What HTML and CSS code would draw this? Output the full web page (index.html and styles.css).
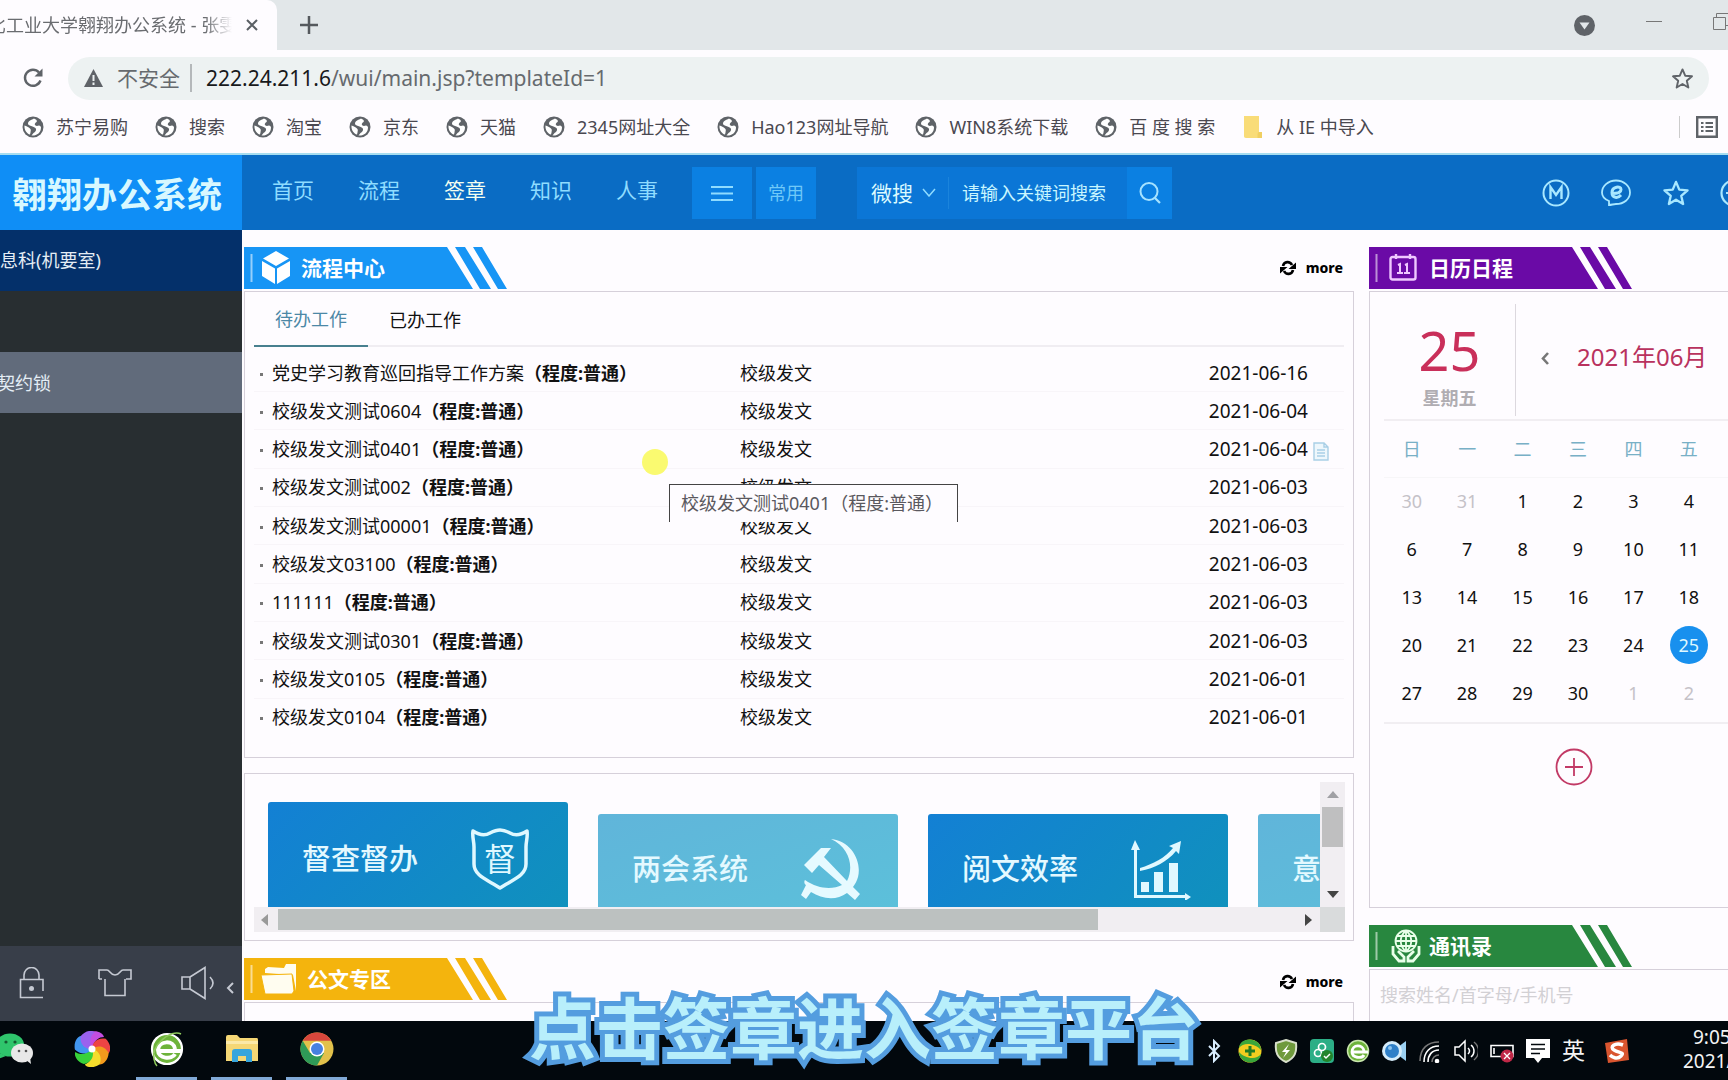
FILE: index.html
```html
<!DOCTYPE html>
<html lang="zh-CN">
<head>
<meta charset="utf-8">
<meta name="viewport" content="width=device-width, initial-scale=1">
<title>翱翔办公系统</title>
<link rel="stylesheet" href="styles.css">
</head>
<body>
<svg class="defs" aria-hidden="true">
  <symbol id="globe" viewBox="0 0 22 22"><circle cx="11" cy="11" r="10.5" fill="#5f6368"/><path d="M11 3c-2 1-5 2-5 4.500 0 2 3 2 4.500 3s3 1 3.500 2.500-1 3-2.500 4l-2 2.500c5 .5 9.500-2.500 9.500-8 0-1-1-2-2-2s-2 1-3.500 0S13 7 14.500 6 13 2 11 3z" fill="#fff"/><path d="M2.500 9.500c2 .5 4 1.500 5.500 3s.5 2.500.5 4l-.5 2C5 18 2 14 2.500 9.500z" fill="#fff"/></symbol>
  <symbol id="ribbon" viewBox="0 0 263 42"><path fill="currentColor" d="M0 0H203L229 42H0zM211 0H221L247 42H236zM229 0H238L263 42H254z"/><path d="M7.500 7V35" stroke="#fff" stroke-opacity=".55" stroke-width="2"/></symbol>
  <symbol id="refresh" viewBox="0 0 16 16"><path d="M3 6C4 1 10 1 12 5M13 10c-1 5-7 5-9 1" fill="none" stroke="#000" stroke-width="2.600"/><path d="M16 2.500V9H8.500zM0 13.500V7h7.500z"/></symbol>
  <symbol id="star" viewBox="0 0 24 24"><path d="M12 2.500l2.800 6.600 7.100.6-5.400 4.700 1.600 7-6.100-3.700-6.100 3.700 1.600-7L2.100 9.700l7.100-.6z" fill="none" stroke="currentColor" stroke-width="2" stroke-linejoin="round"/></symbol>
</svg>

<header class="browser">
  <div class="tabstrip">
    <div class="tab"><span class="tab-title">比工业大学翱翔办公系统 - 张雯</span>
      <button class="plain" aria-label="关闭标签页"><svg width="14" height="14" viewBox="0 0 14 14"><path d="M2 2l10 10M12 2L2 12" stroke="#5a5f64" stroke-width="2"/></svg></button></div>
    <button class="plain new-tab" aria-label="新标签页"><svg width="18" height="18" viewBox="0 0 18 18"><path d="M9 0v18M0 9h18" stroke="#55595d" stroke-width="2.500"/></svg></button>
    <div class="window-tools">
      <svg width="21" height="21" viewBox="0 0 21 21"><circle cx="10.500" cy="10.500" r="10.500" fill="#5f6368"/><path d="M5.500 7.500h10l-5 7z" fill="#e2e7e9"/></svg>
      <svg width="16" height="16" viewBox="0 0 16 16"><path d="M0 4.500h16" stroke="#777"/></svg>
      <svg width="17" height="25" viewBox="0 0 17 25"><path d="M.5 4.500h12v12H.5zM3.500 4.500v-4h13v12h-4" fill="none" stroke="#777"/></svg>
    </div>
  </div>
  <div class="toolbar">
    <button class="plain" aria-label="重新加载"><svg width="22" height="22" viewBox="0 0 22 22"><path d="M18.500 13.500A8 8 0 1 1 17 5.500" fill="none" stroke="#5f6368" stroke-width="2.400"/><path d="M20.500 1.500v8h-8z" fill="#5f6368"/></svg></button>
    <div class="omnibox">
      <svg width="19" height="18" viewBox="0 0 19 18"><path d="M9.500 0L19 18H0z" fill="#5f6368"/><path d="M9.500 6v6M9.500 13.500v2.500" stroke="#edf2f2" stroke-width="2"/></svg>
      <span class="insecure">不安全</span>
      <span class="url"><b>222.24.211.6</b>/wui/main.jsp?templateId=1</span>
      <button class="plain bookmark-star" aria-label="收藏"><svg width="23" height="23"><use href="#star"/></svg></button>
    </div>
  </div>
  <nav class="bookmarks">
    <a href="#"><svg><use href="#globe"/></svg>苏宁易购</a>
    <a href="#"><svg><use href="#globe"/></svg>搜索</a>
    <a href="#"><svg><use href="#globe"/></svg>淘宝</a>
    <a href="#"><svg><use href="#globe"/></svg>京东</a>
    <a href="#"><svg><use href="#globe"/></svg>天猫</a>
    <a href="#"><svg><use href="#globe"/></svg>2345网址大全</a>
    <a href="#"><svg><use href="#globe"/></svg>Hao123网址导航</a>
    <a href="#"><svg><use href="#globe"/></svg>WIN8系统下载</a>
    <a href="#"><svg><use href="#globe"/></svg>百 度 搜 索</a>
    <a href="#"><svg viewBox="0 0 22 22"><path d="M2 0h15v16h3v6H4c-1.500 0-2-1-2-2z" fill="#f9dc78"/><path d="M17 16c-1 0-1.500 1-1.500 3v3H20v-6z" fill="#f0cf62"/></svg>从 IE 中导入</a>
    <button class="plain reading-list" aria-label="阅读清单"><svg width="22" height="22" viewBox="0 0 22 22"><path d="M1.200 1.200h19.600v19.600H1.200z" fill="none" stroke="#5f6368" stroke-width="2.400"/><path d="M5 7h2.500M5 11h2.500M5 15h2.500M9.500 7H17M9.500 11H17M9.500 15H17" stroke="#5f6368" stroke-width="2.200"/></svg></button>
  </nav>
</header>

<div class="app-header">
  <a class="logo" href="#">翱翔办公系统</a>
  <nav class="app-nav"><a href="#">首页</a><a href="#">流程</a><a class="active" href="#">签章</a><a href="#">知识</a><a href="#">人事</a></nav>
  <div class="quick">
    <button aria-label="菜单"><svg width="22" height="16" viewBox="0 0 22 16"><path d="M0 2h22M0 8.500h22M0 15h22" stroke="#8fdcff" stroke-width="2"/></svg></button>
    <button>常用</button>
  </div>
  <form class="search">
    <button type="button" class="scope">微搜<svg width="14" height="9" viewBox="0 0 14 9"><path d="M1 1l6 7 6-7" fill="none" stroke="#8fdcff" stroke-width="1.500"/></svg></button>
    <input type="text" placeholder="请输入关键词搜索" aria-label="请输入关键词搜索">
    <button type="button" class="go" aria-label="搜索"><svg width="22" height="22" viewBox="0 0 22 22"><circle cx="10" cy="9.500" r="8.500" fill="none" stroke="#a5e2ff" stroke-width="2"/><path d="M16 16l5 5" stroke="#a5e2ff" stroke-width="2.200"/></svg></button>
  </form>
  <div class="tools">
    <svg width="28" height="28" viewBox="0 0 28 28" fill="none" stroke="#a9e8ff" stroke-width="2"><circle cx="14" cy="14" r="12.500"/><path d="M8.500 20V8l5.500 8 5.500-8v12" stroke-width="2.400"/></svg>
    <svg width="32" height="28" viewBox="0 0 32 28" fill="none" stroke="#a9e8ff" stroke-width="1.800"><path d="M9 26v-4C4 20 2 17 2 13.500 2 7 8 1.500 16 1.500S30 7 30 13.500 24 25 16 25c-2 0-5 1-7 1z"/><path d="M12 14.500c5 0 9-1 9-4 0-4-9-3-9 3 0 6 6 6 9 2.500" stroke-width="3"/></svg>
    <svg width="28" height="28"><use href="#star"/></svg>
    <svg width="28" height="28" viewBox="0 0 28 28" fill="none" stroke="#a9e8ff" stroke-width="2.200"><circle cx="14" cy="14" r="12.500"/><path d="M6 14h16"/></svg>
  </div>
</div>

<div class="workspace">
  <aside class="sidebar">
    <div class="dept">息科(机要室)</div>
    <nav><a class="blank" href="#" aria-label="菜单项"></a><a class="selected" href="#">契约锁</a></nav>
    <div class="side-tools">
      <button class="plain" aria-label="锁定"><svg width="25" height="32" viewBox="0 0 25 32"><path d="M5 12V8a7.500 7.500 0 0 1 15 0v4M24 24V12.500H1.500v18H24" fill="none" stroke="#c5c9d2" stroke-width="1.600"/><circle cx="12.500" cy="21.500" r="2.500" fill="#c5c9d2"/></svg></button>
      <button class="plain" aria-label="换肤"><svg width="34" height="29" viewBox="0 0 34 29"><path d="M1 11V2h8c3 0 3 5 8 5s5-5 8-5h8v9h-5M7 11v16.500h20V11M1 11h3" fill="none" stroke="#c5c9d2" stroke-width="1.600"/></svg></button>
      <button class="plain" aria-label="声音"><svg width="36" height="34" viewBox="0 0 36 34"><path d="M1 11h8v12H1zM9 11L24 1.500v31L9 23M29 11c4 4 4 8 0 12" fill="none" stroke="#c5c9d2" stroke-width="1.600"/></svg></button>
      <button class="plain" aria-label="收起"><svg width="8" height="12" viewBox="0 0 8 12"><path d="M7 1L2 6l5 5" fill="none" stroke="#c5c9d2" stroke-width="2"/></svg></button>
    </div>
  </aside>

  <main class="center">
    <section>
      <div class="head">
        <div class="banner blue"><svg class="shape"><use href="#ribbon"/></svg><h2><svg width="30" height="34" viewBox="0 0 30 34" fill="#fff"><path d="M15 0l13 7.500L15 15 2 7.500zM1 10l13 7.500V33L1 25zM29 10l-13 7.500V33l13-8z"/></svg>流程中心</h2></div>
        <a class="more" href="#"><svg width="16" height="16"><use href="#refresh"/></svg>more</a>
      </div>
      <div class="panel flow">
        <div class="tabs"><button class="on">待办工作</button><button>已办工作</button></div>
        <table class="tasks">
          <tr><td>党史学习教育巡回指导工作方案<b>（程度:普通）</b></td><td>校级发文</td><td>2021-06-16</td></tr>
          <tr><td>校级发文测试0604<b>（程度:普通）</b></td><td>校级发文</td><td>2021-06-04</td></tr>
          <tr><td>校级发文测试0401<b>（程度:普通）</b></td><td>校级发文</td><td>2021-06-04<svg class="doc" width="18" height="19" viewBox="0 0 18 19"><path d="M2 1h10l4 4v13H2zM12 1v4h4M5 8h8M5 11h8M5 14h8" fill="#eef7fc" stroke="#a9cfe6" stroke-width="1.400"/></svg></td></tr>
          <tr><td>校级发文测试002<b>（程度:普通）</b></td><td>校级发文</td><td>2021-06-03</td></tr>
          <tr><td>校级发文测试00001<b>（程度:普通）</b></td><td>校级发文</td><td>2021-06-03</td></tr>
          <tr><td>校级发文03100<b>（程度:普通）</b></td><td>校级发文</td><td>2021-06-03</td></tr>
          <tr><td>111111<b>（程度:普通）</b></td><td>校级发文</td><td>2021-06-03</td></tr>
          <tr><td>校级发文测试0301<b>（程度:普通）</b></td><td>校级发文</td><td>2021-06-03</td></tr>
          <tr><td>校级发文0105<b>（程度:普通）</b></td><td>校级发文</td><td>2021-06-01</td></tr>
          <tr><td>校级发文0104<b>（程度:普通）</b></td><td>校级发文</td><td>2021-06-01</td></tr>
        </table>
        <span class="pointer"></span>
        <div class="tooltip" role="tooltip">校级发文测试0401（程度:普通）</div>
      </div>
    </section>

    <section class="panel links">
      <div class="scroller">
        <div class="tiles">
          <a class="tile deep tall" href="#">督查督办<svg width="62" height="64" viewBox="0 0 62 64"><path d="M4 4c6 4 12 5 17 2 4-2 6-3 10-3s6 1 10 3c5 3 11 2 17-2 1 6-1 10-1 16v17c0 12-14 16-26 24C19 53 5 49 5 37V20C5 14 3 10 4 4z" fill="none" stroke="#dff8ff" stroke-width="3.500" stroke-linejoin="round"/><text x="31" y="44" class="seal">督</text></svg></a>
          <a class="tile light" href="#">两会系统<svg width="60" height="62" viewBox="0 0 60 62" fill="#e6faff"><path d="M30 1c20 2 31 22 27 38-1 4-3 7-5 10l7 7-5 6-8-7c-11 8-25 6-36-1l-5 7-5-4 5-10c-2-1-2-4-1-5 13 9 27 10 37 5L18 27l-7 8-8-8 17-17h10l-7 9 23 24c7-14 3-33-16-42z"/></svg></a>
          <a class="tile deep" href="#">阅文效率<svg width="60" height="62" viewBox="0 0 60 62" fill="#e0f8ff"><path d="M4 2L0 12h3v48h51v3l6-4-6-4v2H6V12h3zM10 44h8v10h-8zM23 34h9v20h-9zM38 25h9v29h-9z"/><path d="M9 30C22 26 34 20 42 10l-4-2 12-5-2 13-3-3C36 24 24 30 9 33z"/></svg></a>
          <a class="tile light" href="#">意见反馈</a>
        </div>
        <div class="vbar"><i class="up"></i><i class="vthumb"></i><i class="down"></i></div>
        <div class="hbar"><i class="left"></i><i class="hthumb"></i><i class="right"></i></div>
        <div class="corner"></div>
      </div>
    </section>

    <section class="docs">
      <div class="head">
        <div class="banner yellow"><svg class="shape"><use href="#ribbon"/></svg><h2><svg width="36" height="30" viewBox="0 0 36 30" fill="#fffdf0"><path d="M4 9V5l3-2 16 1 2-4h10v27l-3-16z"/><path d="M0 11l31-1 2 17-2 3H4z" stroke="#f4b40d"/></svg>公文专区</h2></div>
        <a class="more" href="#"><svg width="16" height="16"><use href="#refresh"/></svg>more</a>
      </div>
      <div class="panel rest"></div>
    </section>
  </main>

  <aside class="right">
    <section>
      <div class="head"><div class="banner purple"><svg class="shape"><use href="#ribbon"/></svg><h2><svg width="28" height="28" viewBox="0 0 28 28" fill="none" stroke="#efc8ff" stroke-width="2.400"><rect x="1.500" y="3" width="25" height="22.500" rx="2"/><path d="M7 0v5M21 0v5" /><path d="M9 11l2-1v9M8 19h6M16 11l2-1v9M15 19h6" stroke-width="2"/></svg>日历日程</h2></div></div>
      <div class="panel agenda">
        <div class="calendar">
          <div class="cal-top">
            <div class="today"><strong>25</strong><span>星期五</span></div>
            <button class="plain" aria-label="上个月"><svg width="8" height="13" viewBox="0 0 8 13"><path d="M7 1L2 6.500 7 12" fill="none" stroke="#777" stroke-width="2.600"/></svg></button>
            <span class="month">2021年06月</span>
          </div>
          <table class="days">
            <thead><tr><th>日</th><th>一</th><th>二</th><th>三</th><th>四</th><th>五</th><th>六</th></tr></thead>
            <tbody>
              <tr><td class="out">30</td><td class="out">31</td><td>1</td><td>2</td><td>3</td><td>4</td><td>5</td></tr>
              <tr><td>6</td><td>7</td><td>8</td><td>9</td><td>10</td><td>11</td><td>12</td></tr>
              <tr><td>13</td><td>14</td><td>15</td><td>16</td><td>17</td><td>18</td><td>19</td></tr>
              <tr><td>20</td><td>21</td><td>22</td><td>23</td><td>24</td><td><span class="now">25</span></td><td>26</td></tr>
              <tr><td>27</td><td>28</td><td>29</td><td>30</td><td class="out">1</td><td class="out">2</td><td class="out">3</td></tr>
            </tbody>
          </table>
          <div class="add"><button class="plain" aria-label="新建日程"><svg width="38" height="38" viewBox="0 0 38 38" fill="none" stroke="#c23a66" stroke-width="1.800"><circle cx="19" cy="19" r="17.500"/><path d="M19 10v18M10 19h18"/></svg></button></div>
        </div>
      </div>
    </section>
    <section class="contacts">
      <div class="head"><div class="banner green"><svg class="shape"><use href="#ribbon"/></svg><h2><svg width="30" height="34" viewBox="0 0 30 34" fill="none" stroke="#e9ffe9" stroke-width="1.800"><circle cx="15" cy="12" r="10.500"/><path d="M15 1.500v21M4.500 12h21M6 7h18M6 17h18M15 1.500c-7 6-7 15 0 21M15 1.500c7 6 7 15 0 21"/><path d="M2 17v8l6 7h5v-4l-6-6M28 17v8l-6 7h-5v-4l6-6" stroke-width="2.800"/></svg>通讯录</h2></div></div>
      <div class="panel rest"><input type="text" placeholder="搜索姓名/首字母/手机号" aria-label="搜索姓名/首字母/手机号"></div>
    </section>
  </aside>
</div>

<footer class="taskbar">
  <div class="apps">
    <span class="app wechat"><svg width="44" height="32" viewBox="0 0 44 32"><ellipse cx="20" cy="12" rx="14" ry="11.500" fill="#2fc56c"/><path d="M10 20l-2 6 8-3z" fill="#2fc56c"/><circle cx="16" cy="9" r="1.600" fill="#155b32"/><circle cx="25" cy="9" r="1.600" fill="#155b32"/><ellipse cx="32" cy="20" rx="11" ry="9.500" fill="#e8e8e8"/><path d="M36 27l5 4-1-7z" fill="#e8e8e8"/><circle cx="29" cy="18" r="1.300" fill="#555"/><circle cx="36" cy="18" r="1.300" fill="#555"/></svg></span>
    <span class="app"><svg width="36" height="36" viewBox="-18 -18 36 36"><path d="M0 0C-5-3-8-10-2-17 5-19 11-16 12-12 7-12 2-9 0 0z" fill="#c44de0"/><path d="M0 0C-5-3-8-10-2-17 5-19 11-16 12-12 7-12 2-9 0 0z" fill="#ee4444" transform="rotate(60)"/><path d="M0 0C-5-3-8-10-2-17 5-19 11-16 12-12 7-12 2-9 0 0z" fill="#f39a1d" transform="rotate(110)"/><path d="M0 0C-5-3-8-10-2-17 5-19 11-16 12-12 7-12 2-9 0 0z" fill="#f5dd2c" transform="rotate(160)"/><path d="M0 0C-5-3-8-10-2-17 5-19 11-16 12-12 7-12 2-9 0 0z" fill="#38d23a" transform="rotate(215)"/><path d="M0 0C-5-3-8-10-2-17 5-19 11-16 12-12 7-12 2-9 0 0z" fill="#4196f0" transform="rotate(275)"/><path d="M0 0C-5-3-8-10-2-17 5-19 11-16 12-12 7-12 2-9 0 0z" fill="#9a62ee" transform="rotate(325)"/><circle r="3.500" fill="#fff"/></svg></span>
    <span class="app open"><svg width="34" height="36" viewBox="-17 -18 34 36"><circle r="15" fill="#6db33a" stroke="#fff" stroke-width="2.200"/><path d="M-8 2H15M8 0C7-9-8-9-9 1-9 10 5 11 8 5" fill="none" stroke="#fff" stroke-width="4"/><path d="M14-15C4-20-16-4-13 10c1 5 2 6 3 7" fill="none" stroke="#8fca5c" stroke-width="1.500"/></svg></span>
    <span class="app open"><svg width="34" height="28" viewBox="0 0 34 28"><path d="M1 2q0-2 2-2h9l3 3h17q1 0 1 2v21H1z" fill="#f5d775"/><path d="M1 6h32v3H1z" fill="#fbe9a8"/><path d="M7 27V17q0-3 3-3h14q3 0 3 3v10h-6v-6h-8v6z" fill="#37a5dc"/></svg></span>
    <span class="app open"><svg width="34" height="34" viewBox="-17 -17 34 34"><circle r="16.500" fill="#e2c14b"/><path d="M-14.300-8.300A16.500 16.500 0 0 1 14.300-8.300H0z" fill="#d8473c"/><path d="M-14.300-8.300A16.500 16.500 0 0 0 0 16.500L7 4-7 4z" fill="#2f9a57"/><circle r="7.500" fill="#fff"/><circle r="6" fill="#4681e0"/></svg></span>
  </div>
  <div class="tray">
    <svg viewBox="-12 -12 24 24"><path d="M-5-5L5 5 0 10V-10L5-5-5 5" fill="none" stroke="#d9eeff" stroke-width="2"/></svg>
    <svg viewBox="-12 -12 24 24"><circle r="11.500" fill="#f2cd20"/><path d="M-11-3C-6-10 6-7 11-1 11-14-10-15-11-3zM11 3C6 10-6 7-11 1-11 14 10 15 11 3z" fill="#3aa63a"/><path d="M0-5V5M-5 0H5" stroke="#217b24" stroke-width="3"/></svg>
    <svg viewBox="-12 -12 24 24"><path d="M0-11l10 3c1 9-1 15-10 19-9-4-11-10-10-19z" fill="#6f9a3c" stroke="#d9e0cb" stroke-width="2"/><path d="M3-7l-7 8h4l-3 6 7-8H0z" fill="#fff"/></svg>
    <svg viewBox="-12 -12 24 24"><rect x="-12" y="-12" width="24" height="24" rx="4" fill="#2cae86"/><circle cx="-4" cy="2" r="3.500" fill="none" stroke="#fff" stroke-width="1.700"/><circle cx="0" cy="-4" r="3.500" fill="none" stroke="#fff" stroke-width="1.700"/><circle cx="5" cy="5" r="6" fill="#23852c"/><path d="M2 5l2 2 4-4" fill="none" stroke="#fff" stroke-width="1.500"/></svg>
    <svg viewBox="-12 -12 24 24"><circle r="10.500" fill="#6db33a" stroke="#c9e6ae" stroke-width="1.500"/><path d="M-6 1H10M6 0C5-7-6-7-6 1-6 7 4 8 6 4" fill="none" stroke="#fff" stroke-width="2.800"/></svg>
    <svg viewBox="-12 -12 24 24"><path d="M4-4l8-6V10L4 4z" fill="#9ad0f2"/><circle r="10" cx="-2" fill="#d5edfb"/><circle r="7" cx="-2" fill="#2f80c8"/><circle r="2" cx="-4" cy="-3" fill="#8cc5f0"/></svg>
    <svg viewBox="-12 -12 24 24" fill="none" stroke="#fff" stroke-width="1.600"><path d="M-10 10C-10-3-2-9 9-9" stroke="#777"/><path d="M-6 11C-6 1 0-5 9-5M-2 11C-2 4 2-1 9-1"/><path d="M2 11C2 7 5 4 9 4" stroke="#777"/><circle cx="7" cy="10" r="1.500" fill="#fff"/></svg>
    <svg viewBox="-12 -12 24 24" fill="none" stroke="#fff" stroke-width="1.500"><path d="M-11-4h4l6-6v20l-6-6h-4zM2-3c2 2 2 4 0 6M5-6c4 3 4 9 0 12"/><path d="M8-9c6 5 6 13 0 18" stroke="#777"/></svg>
    <svg viewBox="-12 -12 24 24"><path d="M-11-5.500H11v11H-11zM-8-3v6" fill="none" stroke="#fff" stroke-width="1.600"/><circle cx="5" cy="5" r="6.500" fill="#c02847"/><path d="M2 2l6 6M8 2L2 8" stroke="#fff" stroke-width="1.300"/></svg>
    <svg viewBox="-12 -12 24 24"><path d="M-12-12h24V7H4l-4 5-4-5h-8z" fill="#fff"/><path d="M-7-6.500H7M-7-2H7M-7 2.500H2" stroke="#02080d" stroke-width="1.600"/></svg>
    <span class="ime">英</span>
    <svg viewBox="-12 -12 24 24"><path d="M-12-8L10-12 12 9-9 12z" fill="#d9552f"/><path d="M6-6C-2-9-8-4-3-1S8 1 4 5-5 6-7 4" fill="none" stroke="#fff" stroke-width="3.500"/></svg>
  </div>
  <div class="clock"><span>9:05</span><span>2021/</span></div>
</footer>
<div class="caption">点击签章进入签章平台</div>
</body>
</html>
```
FILE: styles.css
```css
* { box-sizing: border-box; }
body {
  margin: 0;
  height: 100vh;
  overflow: hidden;
  display: flex;
  flex-direction: column;
  position: relative;
  background: #fefcff;
  color: #111;
  font: 18px/24px "Noto Sans", "Noto Sans CJK SC", sans-serif;
}
a { color: inherit; text-decoration: none; }
button, input { font: inherit; color: inherit; border: 0; padding: 0; margin: 0; background: none; }
svg { display: block; flex: none; }
h2 { margin: 0; }
.defs { position: absolute; width: 0; height: 0; }
.plain { display: grid; place-items: center; flex: none; }

/* browser chrome */
.browser { flex: none; white-space: nowrap; }
.tabstrip { height: 50px; background: #e2e7e9; display: flex; align-items: center; }
.tab {
  width: 277px; height: 50px; flex: none; background: #fefcff; border-radius: 0 10px 0 0;
  display: flex; align-items: center; gap: 13px; color: #6a6c70;
}
.tab-title {
  width: 232px; overflow: hidden; display: flex; text-indent: -12px;
  mask-image: linear-gradient(90deg, #000 205px, transparent 232px);
}
.new-tab { margin-left: 23px; }
.window-tools { margin-left: auto; margin-right: -2px; display: flex; align-items: center; gap: 51px; }
.toolbar { height: 54px; padding: 6px 19px 4px 22px; display: flex; align-items: center; gap: 24px; }
.omnibox {
  flex: 1; height: 43px; border-radius: 22px; background: #edf2f2; padding: 0 15px 0 16px;
  display: flex; align-items: center; gap: 14px; font-size: 21px; color: #666a6e;
}
.insecure { border-right: 2px solid #b4b8ba; padding-right: 10px; line-height: 28px; }
.url b { font-weight: 400; color: #17191b; }
.bookmark-star { margin-left: auto; color: #5f6368; }
.bookmarks { height: 49px; padding: 0 10px 4px 22px; display: flex; align-items: center; gap: 27px; color: #4a4850; }
.bookmarks a { display: flex; align-items: center; gap: 12px; }
.bookmarks a svg { width: 22px; height: 22px; }
.reading-list { margin-left: auto; border-left: 1px solid #ccc; padding-left: 16px; }

/* application header */
.app-header {
  flex: none; height: 77px; background: #0a6cc4; border-top: 2px solid #a6ddf0;
  display: flex; align-items: center; white-space: nowrap;
}
.logo {
  width: 242px; align-self: stretch; flex: none; background: #0f8ef6; color: #d8f8ff; padding-right: 8px;
  font: bold 35px/75px "Noto Sans CJK SC", sans-serif; display: grid; place-items: center;
}
.app-nav { display: flex; gap: 44px; padding: 0 34px 6px 30px; font-size: 21px; color: #8fdcff; }
.app-nav .active { color: #f4fff0; }
.quick { display: flex; gap: 4px; }
.quick button { width: 60px; height: 52px; background: #0b80e2; color: #6fc8f8; display: grid; place-items: center; }
.search { margin-left: 41px; width: 315px; height: 52px; background: #0b76d6; display: flex; align-items: center; }
.scope { display: flex; align-items: center; gap: 9px; padding: 0 12px 0 14px; color: #dcfaff; font-size: 21px; border-right: 1px solid #1b84dc; line-height: 32px; }
.search input { flex: 1; min-width: 0; padding-left: 13px; }
.search input::placeholder { color: #c9f6ff; opacity: 1; }
.go { width: 45px; height: 52px; background: #0b80e2; display: grid; place-items: center; }
.tools { margin-left: auto; margin-right: -20px; display: flex; gap: 30px; color: #a9e8ff; }

/* workspace */
.workspace { flex: 1; min-height: 0; display: flex; overflow: hidden; }
.sidebar { width: 242px; flex: none; background: #282e31; color: #e4edf5; display: flex; flex-direction: column; }
.dept { height: 61px; line-height: 61px; background: #04306a; }
.sidebar nav { flex: 1; }
.sidebar nav a { display: block; height: 61px; line-height: 63px; text-indent: -3px; }
.sidebar .selected { background: #616b7b; }
.side-tools { height: 75px; background: #383e49; padding: 0 8px 2px 19px; display: flex; align-items: center; }
.side-tools button:nth-child(2) { margin-left: 54px; }
.side-tools button:nth-child(3) { margin-left: 49px; }
.side-tools button:last-child { margin: 10px 0 0 auto; }
.center { flex: 1; min-width: 0; padding: 17px 15px 0 2px; display: flex; flex-direction: column; }
.right { flex: none; width: 410px; margin-right: -51px; padding-top: 17px; display: flex; flex-direction: column; }
.head { display: flex; justify-content: space-between; align-items: center; padding-right: 11px; margin-bottom: 2px; }
.banner { display: grid; width: 263px; height: 42px; }
.banner > * { grid-area: 1 / 1; }
.shape { width: 263px; height: 42px; }
.banner h2 { display: flex; align-items: center; gap: 10px; padding-left: 17px; color: #fff; font-size: 21px; line-height: 42px; }
.blue { color: #1795f5; }
.purple { color: #6a0aa6; }
.yellow { color: #f4b40d; }
.green { color: #28873f; }
.purple h2 { padding-left: 20px; gap: 12px; }
.green h2 { padding-left: 22px; gap: 8px; }
.more { display: flex; align-items: center; gap: 10px; font-size: 14px; font-weight: 800; color: #000; }
.docs .more { padding-top: 5px; }
.panel { border: 1px solid #d6d0da; }
.flow { position: relative; height: 467px; padding: 0 9px; }
.tabs { height: 55px; border-bottom: 2px solid #f0edf2; display: flex; }
.tabs button { height: 55px; padding: 0 21px; color: #111; }
.tabs .on { color: #4c88a6; border-bottom: 2px solid #48808f; }
.tasks { width: 100%; height: 382px; margin-top: 7px; border-collapse: collapse; table-layout: fixed; }
.tasks td { padding: 0; white-space: nowrap; border-bottom: 1px solid #f8f5f9; }
.tasks tr:last-child td { border: 0; }
.tasks td:first-child { width: 486px; }
.tasks td:first-child::before { content: ""; display: inline-block; width: 3px; height: 3px; margin: 0 9px 4px 6px; background: #777; }
.tasks td:last-child { position: relative; text-align: right; padding-right: 36px; font-size: 19px; }
.doc { position: absolute; right: 14px; top: 12px; }
.pointer { position: absolute; left: 397px; top: 157px; width: 26px; height: 26px; border-radius: 50%; background: #fafa70; }
.tooltip { position: absolute; left: 424px; top: 192px; height: 38px; width: 289px; padding: 6px 11px; border: 1px solid #444; border-bottom: 0; background: #fefcff; color: #5a585e; white-space: nowrap; }

.links { margin-top: 15px; height: 168px; padding: 8px 8px 8px 9px; }
.scroller { display: grid; grid-template-columns: 1fr 25px; grid-template-rows: 125px 25px; height: 150px; }
.tiles { overflow: hidden; display: flex; align-items: flex-end; gap: 30px; padding-left: 14px; }
.tile { flex: none; width: 300px; height: 93px; border-radius: 3px 3px 0 0; padding: 16px 37px 0 34px; display: flex; align-items: center; justify-content: space-between; color: #e4f9ff; font-size: 29px; font-weight: 500; white-space: nowrap; }
.tall { height: 105px; padding-top: 8px; }
.deep { background: linear-gradient(135deg, #1380d4, #1091bd); }
.light { background: linear-gradient(160deg, #60b5da, #5cc0da); }
.seal { font-size: 32px; font-weight: 400; fill: #dff8ff; text-anchor: middle; }
.vbar, .hbar { background: #f1eef2; display: flex; align-items: center; }
.vbar { flex-direction: column; padding: 9px 0 9px; }
.vthumb { width: 21px; height: 40px; margin-top: 9px; background: #bfbfc0; }
.hbar { padding: 0 8px 0 7px; }
.hthumb { height: 21px; width: 78%; margin-left: 10px; background: #bcc1c0; }
.corner { background: #d9dbdc; }
.up, .down { border: 6px solid transparent; border-top: 0; border-bottom: 7px solid #a0a0a4; }
.down { margin-top: auto; border-top: 7px solid #444; border-bottom: 0; }
.left, .hbar .right { border: 6px solid transparent; border-left: 0; border-right: 7px solid #999; }
.hbar .right { width: 0; padding: 0; margin: 0 0 0 auto; border-left: 7px solid #444; border-right: 0; }
.docs { margin-top: 17px; flex: 1; display: flex; flex-direction: column; }
.rest { flex: 1; border-bottom: 0; }

/* calendar */
.agenda { height: 617px; padding: 13px 15px 0 14px; }
.cal-top { height: 116px; border-bottom: 2px solid #f1eef2; display: flex; align-items: center; color: #b9325e; }
.today { width: 132px; height: 112px; margin-bottom: 4px; border-right: 1px solid #dcd8de; display: flex; flex-direction: column; align-items: center; }
.today strong { font-size: 54px; line-height: 64px; font-weight: 400; margin-top: 14px; color: #c92f5a; }
.today span { font-weight: 700; color: #b0adb2; line-height: 32px; }
.cal-top button { margin: 0 28px 8px 25px; }
.month { font-size: 24px; padding-bottom: 10px; }
.days { width: 388px; border-collapse: collapse; table-layout: fixed; text-align: center; }
.days th { height: 56px; padding: 0; font-weight: 400; color: #78b0c6; border-bottom: 1px solid #f7f6f8; }
.days td { height: 48px; padding: 0; }
.days .out { color: #c5c2c8; }
.now { display: block; width: 38px; height: 38px; line-height: 38px; margin: 0 auto; border-radius: 50%; background: #1890ee; color: #dff8ff; }
.add { height: 88px; border-top: 2px solid #f1eef2; display: grid; place-items: center; margin-top: 5px; }
.contacts { margin-top: 17px; flex: 1; display: flex; flex-direction: column; }
.contacts input { width: 100%; height: 50px; padding-left: 10px; }
.contacts input::placeholder { color: #d2d0d4; opacity: 1; }

/* taskbar */
.taskbar { flex: none; height: 59px; background: #02080d; color: #f4f4f4; display: flex; overflow: hidden; }
.apps { display: flex; gap: 14px; margin-left: -14px; }
.app { width: 61px; display: grid; place-items: center; border-bottom: 3px solid transparent; }
.wechat { place-items: center start; padding-left: 4px; }
.open { border-bottom-color: #80a9d6; }
.tray { margin-left: auto; display: flex; align-items: center; gap: 12px; }
.tray svg { width: 24px; height: 24px; }
.ime { font-size: 23px; width: 23px; padding-bottom: 2px; }
.tray svg:last-child { margin-left: 8px; }
.clock { width: 99px; padding: 4px 0 0 54px; font-size: 19px; display: flex; flex-direction: column; align-items: flex-start; }
.clock span:first-child { padding-left: 10px; }

.caption {
  position: absolute; left: 0; right: 0; bottom: 15px; text-align: center;
  font: bold 67px/80px "Noto Sans CJK SC", sans-serif; color: #b8effb;
  -webkit-text-stroke: 10px #549ddf; paint-order: stroke fill;
}
```
